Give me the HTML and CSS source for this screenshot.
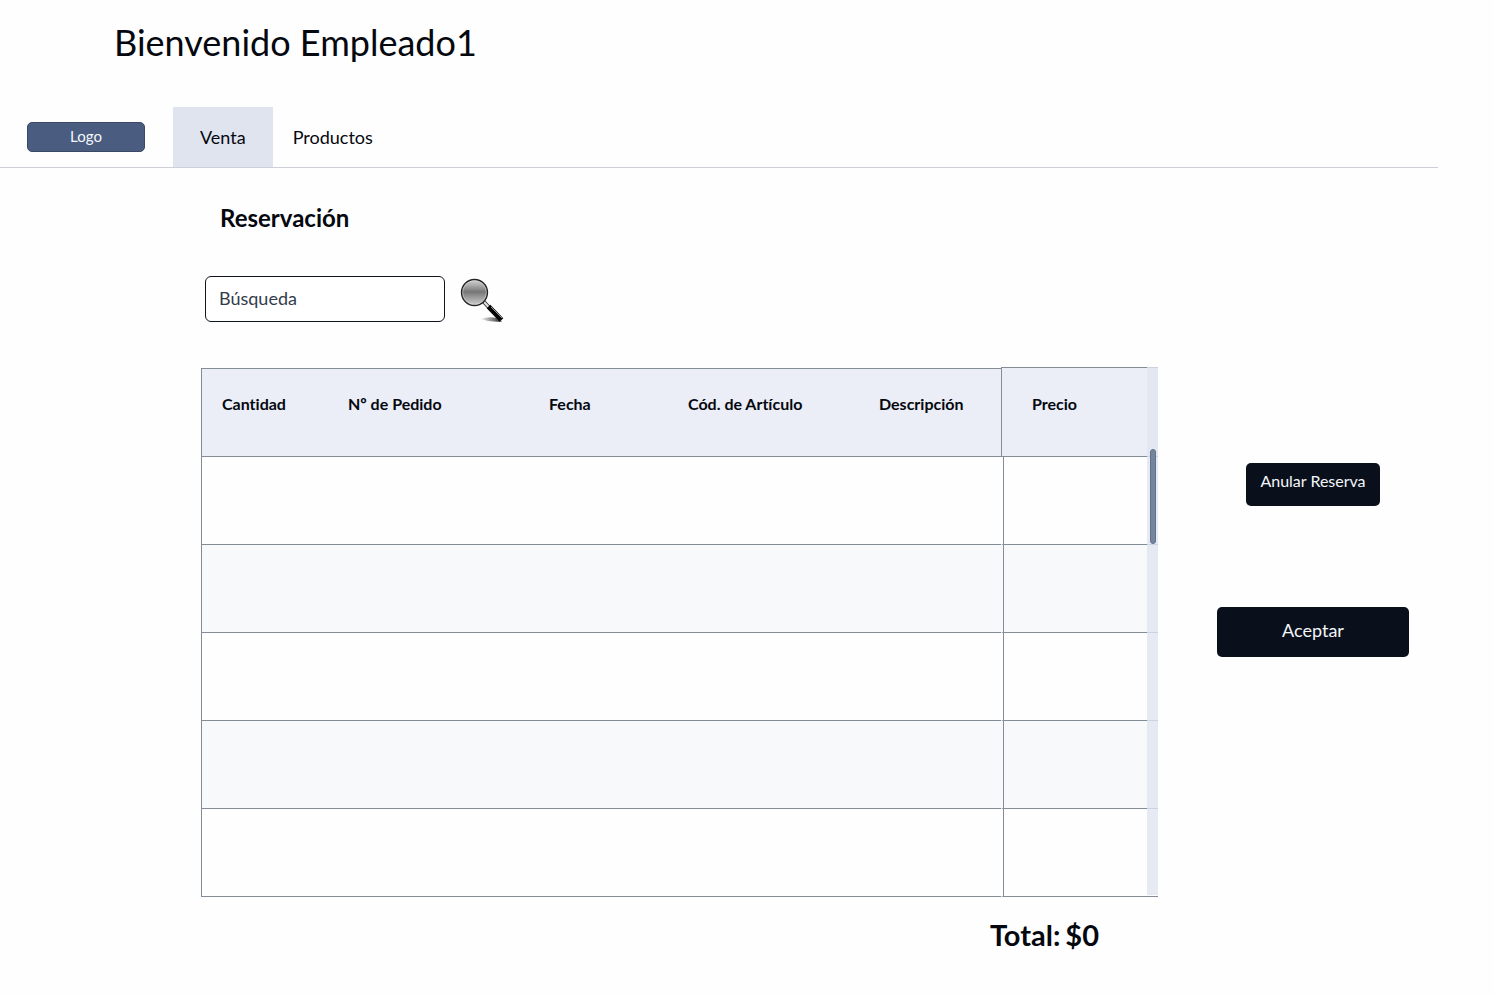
FILE: index.html
```html
<!DOCTYPE html>
<html lang="es">
<head>
  <meta charset="utf-8">
  <meta name="viewport" content="width=device-width, initial-scale=1">
  <title>Reservación</title>
  <link rel="stylesheet" href="styles.css">
</head>
<body>
  <header class="site-header">
    <h1 class="welcome">Bienvenido Empleado1</h1>
    <nav class="nav">
      <a class="logo" href="#">Logo</a>
      <a class="tab tab-active" href="#" aria-current="page">Venta</a>
      <a class="tab" href="#">Productos</a>
    </nav>
  </header>

  <main class="content">
    <h2 class="section-title">Reservación</h2>

    <form class="search">
      <input class="search-input" type="text" placeholder="Búsqueda" aria-label="Búsqueda">
      <button class="search-button" type="button" aria-label="Buscar">
        <svg class="search-icon" viewBox="0 0 44 46" aria-hidden="true">
          <defs>
            <linearGradient id="lens" x1="0" y1="0" x2="0" y2="1">
              <stop offset="0" stop-color="#d2d2d2"/>
              <stop offset="0.2" stop-color="#b0b0b0"/>
              <stop offset="0.48" stop-color="#757575"/>
              <stop offset="0.56" stop-color="#858585"/>
              <stop offset="1" stop-color="#d0d0d0"/>
            </linearGradient>
            <linearGradient id="shade" x1="0" y1="0" x2="1" y2="0">
              <stop offset="0" stop-color="#000" stop-opacity="0"/>
              <stop offset="1" stop-color="#000" stop-opacity="0.85"/>
            </linearGradient>
          </defs>
          <path d="M20 43 Q29 40 37 42 L42 45.500 Q30 46.500 20 43Z" fill="url(#shade)"/>
          <path d="M23.500 25.500 L30 32.500" stroke="#333" stroke-width="4"/>
          <path d="M24 26 L30 32.500" stroke="#e4e4e4" stroke-width="2"/>
          <path d="M28.500 30.500 L41.500 44" stroke="#050505" stroke-width="5"/>
          <path d="M31 31 L42 42" stroke="#999" stroke-width="1"/>
          <circle cx="14.500" cy="16.500" r="13" fill="url(#lens)" stroke="#222" stroke-width="1.300"/>
          <circle cx="14.500" cy="16.500" r="11.800" fill="none" stroke="#ddd" stroke-opacity="0.6" stroke-width="0.800"/>
        </svg>
      </button>
    </form>

    <div class="workspace">
      <section class="order">
        <div class="tables">
          <table class="grid grid-items">
            <colgroup>
              <col class="col-qty"><col class="col-order"><col class="col-date"><col class="col-code"><col>
            </colgroup>
            <thead>
              <tr><th>Cantidad</th><th>Nº de Pedido</th><th>Fecha</th><th>Cód. de Artículo</th><th>Descripción</th></tr>
            </thead>
            <tbody>
              <tr><td colspan="5"></td></tr>
              <tr><td colspan="5"></td></tr>
              <tr><td colspan="5"></td></tr>
              <tr><td colspan="5"></td></tr>
              <tr><td colspan="5"></td></tr>
            </tbody>
          </table>
          <table class="grid grid-price">
            <thead>
              <tr><th>Precio</th></tr>
            </thead>
            <tbody>
              <tr><td></td></tr>
              <tr><td></td></tr>
              <tr><td></td></tr>
              <tr><td></td></tr>
              <tr><td></td></tr>
            </tbody>
          </table>
          <div class="scroll-track"><div class="scroll-thumb"></div></div>
        </div>
        <p class="total"><span>Total:</span><span>$0</span></p>
      </section>
      <aside class="actions">
        <button class="button button-cancel" type="button">Anular Reserva</button>
        <button class="button button-accept" type="button">Aceptar</button>
      </aside>
    </div>
  </main>
</body>
</html>
```
FILE: styles.css
```css
* {
  box-sizing: border-box;
}

body {
  margin: 0;
  background: #fefefe;
  color: #05080f;
  font-family: Lato, sans-serif;
  font-variant-ligatures: none;
}

.site-header {
  padding-top: 18px;
}

.welcome {
  margin: 0 0 41px;
  padding-left: 114px;
  font-size: 36px;
  font-weight: 400;
  line-height: 48px;
}

.nav {
  display: flex;
  align-items: center;
  margin-right: 56px;
  border-bottom: 1px solid #cdd0d6;
}

.logo {
  width: 118px;
  margin: 0 28px 0 27px;
  padding-bottom: 2px;
  border: 1px solid #3a4a66;
  border-radius: 5px;
  background: #4a5d80;
  color: #f4f7fb;
  font-size: 15px;
  line-height: 26px;
  text-align: center;
  text-decoration: none;
}

.tab {
  padding: 0 20px;
  color: #05080f;
  font-size: 18px;
  line-height: 60px;
  text-decoration: none;
}

.tab-active {
  padding: 0 27px;
  background: #e0e4ef;
}

.content {
  padding: 36px 85px 0 201px;
}

.section-title {
  margin: 0 0 44px 19px;
  font-size: 24px;
  line-height: 28px;
}

.search {
  display: flex;
  align-items: center;
  gap: 15px;
  margin: 0 0 45px 4px;
}

.search-input {
  width: 240px;
  height: 46px;
  padding: 0 13px 2px;
  border: 1px solid #10141c;
  border-radius: 6px;
  background: #fff;
  font-family: inherit;
  font-size: 18px;
}

.search-input::placeholder {
  color: #323c4b;
  opacity: 1;
}

.search-button {
  padding: 0;
  border: 0;
  background: none;
}

.search-icon {
  display: block;
  width: 44px;
  height: 46px;
}

.workspace {
  display: grid;
  grid-template-columns: 1fr 192px;
  gap: 59px;
}

.tables {
  position: relative;
  display: grid;
  grid-template-columns: 1fr 157px;
  align-items: start;
}

.grid {
  width: 100%;
  border-collapse: separate;
  border-spacing: 0;
  table-layout: fixed;
}

.grid th,
.grid td {
  height: 88px;
  padding: 0;
  border-bottom: 1px solid #838d98;
}

.grid th {
  padding-top: 25px;
  border-top: 1px solid #838d98;
  background: #ebeef6;
  font-size: 16px;
  line-height: 20px;
  text-align: left;
  vertical-align: top;
}

.grid tr > :first-child {
  border-left: 1px solid #838d98;
}

.grid th:first-child {
  padding-left: 20px;
}

.grid tbody tr:nth-child(even) {
  background: #f8f9fb;
}

.grid-items {
  margin-top: 1px;
}

.grid-items th {
  height: 89px;
}

.grid-price th {
  height: 90px;
}

.grid-price th:first-child {
  padding-top: 26px;
  padding-left: 30px;
}

.grid-price tbody tr > :first-child {
  border-left: 2px solid transparent;
  box-shadow: inset 1px 0 #838d98;
}

.col-qty {
  width: 147px;
}

.col-order {
  width: 201px;
}

.col-date {
  width: 139px;
}

.col-code {
  width: 191px;
}

.scroll-track {
  position: absolute;
  top: 0;
  right: 0;
  bottom: 2px;
  width: 11px;
  padding: 82px 2px 0 3px;
  background: rgba(224, 229, 240, 0.8);
}

.scroll-thumb {
  height: 95px;
  border: 1px solid #60718c;
  border-radius: 3px;
  background: #75859c;
}

.total {
  display: flex;
  justify-content: flex-end;
  gap: 5px;
  margin: 20px 59px 0 0;
  font-size: 29px;
  font-weight: 700;
  line-height: 36px;
}

.actions {
  display: flex;
  flex-direction: column;
  align-items: center;
  gap: 101px;
  padding-top: 96px;
}

.button {
  border: 0;
  border-radius: 5px;
  background: #0a101b;
  color: #f3f6fa;
  font-family: inherit;
}

.button-cancel {
  padding: 8px 14px 15px;
  font-size: 16px;
  line-height: 20px;
}

.button-accept {
  width: 100%;
  padding: 11px 0 15px;
  font-size: 18px;
  line-height: 24px;
}
```
